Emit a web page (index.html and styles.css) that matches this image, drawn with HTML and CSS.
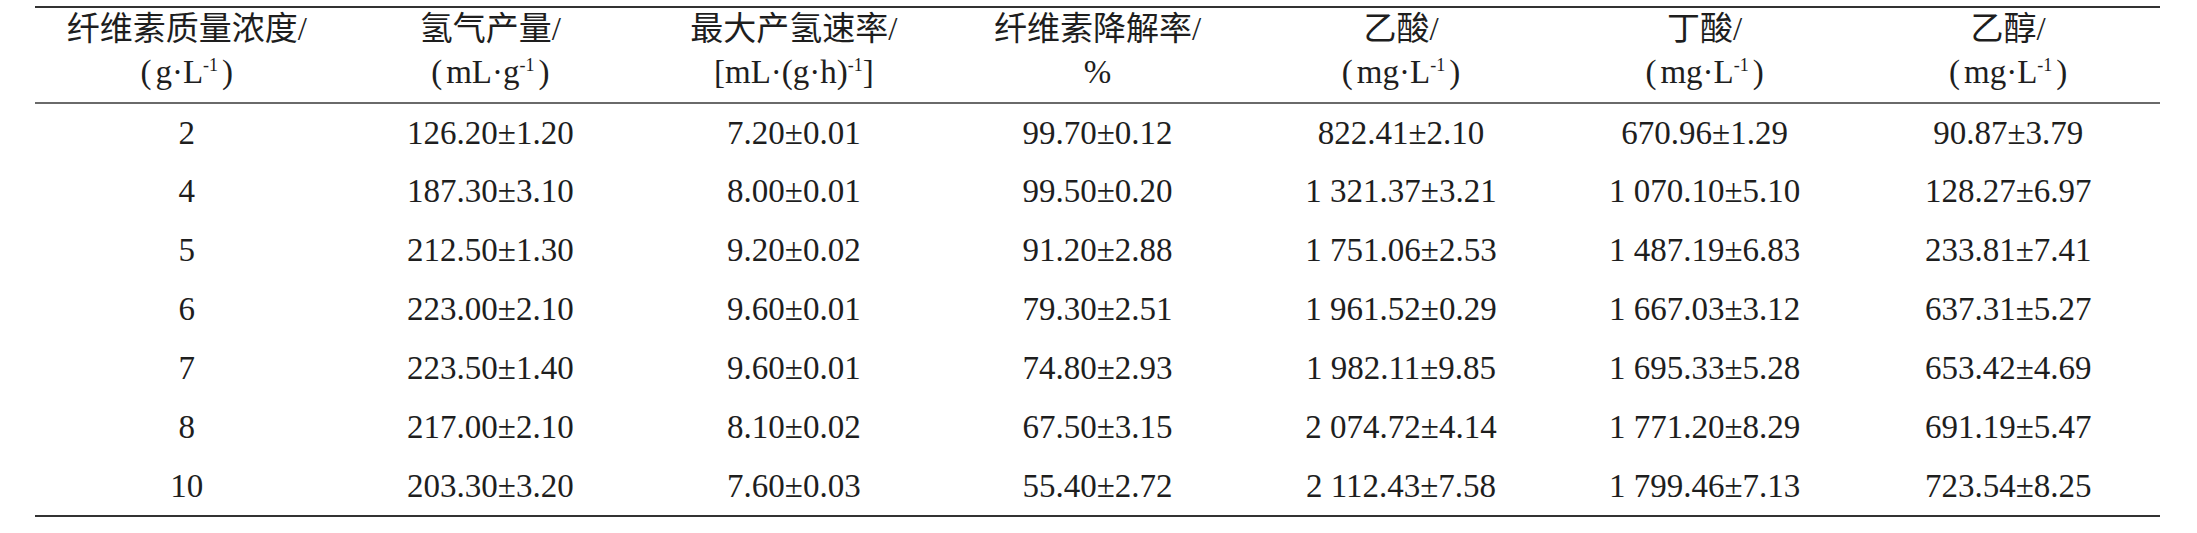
FILE: index.html
```html
<!DOCTYPE html>
<html lang="zh-CN">
<head>
  <meta charset="UTF-8">
  <title>纤维素质量浓度对产氢的影响</title>
  <link rel="stylesheet" href="styles.css">
</head>
<body>
  <table class="data-table">
    <thead>
      <tr>
        <th>纤维素质量浓度/<br><span class="par">(</span>g·L<sup>-1</sup><span class="par">)</span></th>
        <th>氢气产量/<br><span class="par">(</span>mL·g<sup>-1</sup><span class="par">)</span></th>
        <th>最大产氢速率/<br>[mL·(g·h)<sup>-1</sup>]</th>
        <th>纤维素降解率/<br>%</th>
        <th>乙酸/<br><span class="par">(</span>mg·L<sup>-1</sup><span class="par">)</span></th>
        <th>丁酸/<br><span class="par">(</span>mg·L<sup>-1</sup><span class="par">)</span></th>
        <th>乙醇/<br><span class="par">(</span>mg·L<sup>-1</sup><span class="par">)</span></th>
      </tr>
    </thead>
    <tbody>
      <tr>
        <td>2</td><td>126.20±1.20</td><td>7.20±0.01</td><td>99.70±0.12</td>
        <td>822.41±2.10</td><td>670.96±1.29</td><td>90.87±3.79</td>
      </tr>
      <tr>
        <td>4</td><td>187.30±3.10</td><td>8.00±0.01</td><td>99.50±0.20</td>
        <td>1 321.37±3.21</td><td>1 070.10±5.10</td><td>128.27±6.97</td>
      </tr>
      <tr>
        <td>5</td><td>212.50±1.30</td><td>9.20±0.02</td><td>91.20±2.88</td>
        <td>1 751.06±2.53</td><td>1 487.19±6.83</td><td>233.81±7.41</td>
      </tr>
      <tr>
        <td>6</td><td>223.00±2.10</td><td>9.60±0.01</td><td>79.30±2.51</td>
        <td>1 961.52±0.29</td><td>1 667.03±3.12</td><td>637.31±5.27</td>
      </tr>
      <tr>
        <td>7</td><td>223.50±1.40</td><td>9.60±0.01</td><td>74.80±2.93</td>
        <td>1 982.11±9.85</td><td>1 695.33±5.28</td><td>653.42±4.69</td>
      </tr>
      <tr>
        <td>8</td><td>217.00±2.10</td><td>8.10±0.02</td><td>67.50±3.15</td>
        <td>2 074.72±4.14</td><td>1 771.20±8.29</td><td>691.19±5.47</td>
      </tr>
      <tr>
        <td>10</td><td>203.30±3.20</td><td>7.60±0.03</td><td>55.40±2.72</td>
        <td>2 112.43±7.58</td><td>1 799.46±7.13</td><td>723.54±8.25</td>
      </tr>
    </tbody>
  </table>
</body>
</html>
```

FILE: styles.css
```css
* {
  margin: 0;
  padding: 0;
  box-sizing: border-box;
}

body {
  background-color: #fff;
  color: #1e1e1e;
  font-family: "Liberation Serif", "Noto Sans CJK SC", serif;
  font-size: 33px;
  padding: 6px 0 0 35px;
}

.data-table {
  width: 2125px;
  table-layout: fixed;
  border-collapse: collapse;
  border-top: 2px solid #333;
  border-bottom: 2px solid #333;
}

.data-table th {
  font-weight: normal;
  line-height: 43px;
  padding: 0 0 8px;
  text-align: center;
  border-bottom: 2px solid #6a6a6a;
}

.data-table th sup,
.data-table th .par {
  font-family: "Liberation Serif", serif;
}

.data-table sup {
  font-size: 18px;
  vertical-align: 12px;
  line-height: 0;
}

.par {
  margin: 0 4px;
}

.data-table td {
  height: 59px;
  text-align: center;
  vertical-align: middle;
  white-space: nowrap;
}
```
